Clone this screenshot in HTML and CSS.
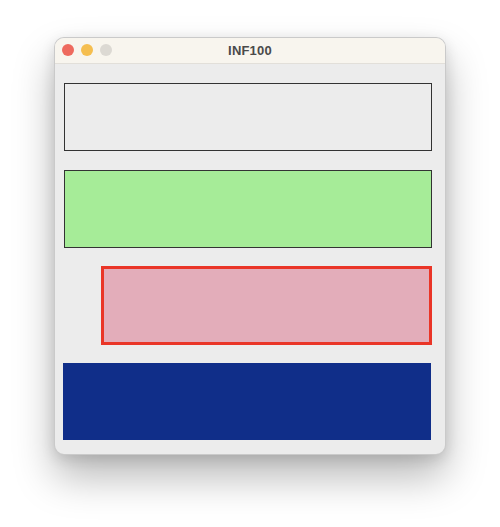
FILE: index.html
```html
<!DOCTYPE html>
<html>
<head>
<meta charset="utf-8">
<link rel="stylesheet" href="styles.css">
</head>
<body>
<div class="stage">
  <div class="window">
    <div class="titlebar">
      <div class="lights">
        <span class="light red"></span>
        <span class="light yellow"></span>
        <span class="light gray"></span>
      </div>
      <div class="title">INF100</div>
    </div>
    <div class="content">
      <div class="box box-plain"></div>
      <div class="box box-green"></div>
      <div class="box box-pink"></div>
      <div class="box box-blue"></div>
    </div>
  </div>
</div>
</body>
</html>
```
FILE: styles.css
```css
html, body {
  margin: 0;
  padding: 0;
  background: #ffffff;
  font-family: "Liberation Sans", Arial, sans-serif;
}
.stage {
  width: 500px;
  height: 527px;
  padding: 37px 0 0 54px;
  box-sizing: border-box;
}
.window {
  width: 392px;
  height: 418px;
  box-sizing: border-box;
  border-radius: 10px;
  background: #ececec;
  border: 1px solid rgba(0,0,0,0.14);
  box-shadow: 0 22px 40px rgba(0,0,0,0.28), 0 4px 14px rgba(0,0,0,0.12);
  overflow: hidden;
  display: flex;
  flex-direction: column;
}
.titlebar {
  height: 25px;
  flex: none;
  background: #f8f5ee;
  border-bottom: 1px solid #e2dfd9;
  position: relative;
  display: flex;
  align-items: center;
  justify-content: center;
}
.lights {
  position: absolute;
  left: 7px;
  top: 6px;
  display: flex;
  gap: 7px;
}
.light {
  width: 12px;
  height: 12px;
  border-radius: 50%;
  display: block;
}
.red { background: #ee6a5e; }
.yellow { background: #f5be4f; }
.gray { background: #dcd9d3; }
.title {
  font-weight: bold;
  font-size: 13px;
  color: #4a4a4a;
  letter-spacing: 0.2px;
}
.content {
  padding: 19px 13px 0 9px;
  display: flex;
  flex-direction: column;
}
.box {
  box-sizing: border-box;
  width: 368px;
  align-self: flex-start;
}
.box-plain {
  height: 68px;
  border: 1px solid #333333;
  background: #ececec;
}
.box-green {
  margin-top: 19px;
  height: 78px;
  border: 1px solid #333333;
  background: #a6ec98;
}
.box-pink {
  margin-top: 18px;
  margin-left: 37px;
  width: 331px;
  height: 79px;
  border: 3px solid #ea3527;
  background: #e3adba;
}
.box-blue {
  margin-top: 18px;
  margin-left: -1px;
  height: 77px;
  background: #102e89;
}
```
